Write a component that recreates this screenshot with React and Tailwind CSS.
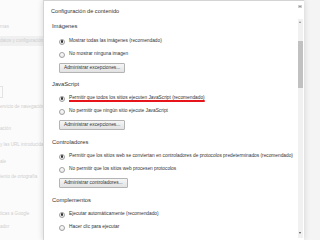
import React from "react";

const font = { fontFamily: '"Liberation Sans", Arial, sans-serif' };

const Radio = ({ checked, children }) => (
    <div className="h-[13px] flex items-center pl-[15px] gap-[4px]">
        <span className="w-[6px] h-[6px] rounded-full border border-[#a0a0a0] bg-gradient-to-b from-[#ffffff] to-[#e8e8e8] flex items-center justify-center shrink-0">
            {checked && <span className="w-[2.5px] h-[2.5px] rounded-full bg-[#333]" />}
        </span>
        <span className="text-[4.8px] text-[#333] whitespace-nowrap leading-none">{children}</span>
    </div>
);

const Btn = ({ children }) => (
    <div className="ml-[15px] h-[10px] w-fit px-[4px] flex items-center border border-[#b4b4b4] rounded-[1px] bg-gradient-to-b from-[#f6f6f6] to-[#e2e2e2] text-[4.8px] text-[#333] leading-none">
        {children}
    </div>
);

const Heading = ({ children }) => (
    <div className="h-[10px] flex items-center pl-[8px] text-[5.8px] text-[#333] leading-none">{children}</div>
);

const bgLines = [
    { y: "mt-[24px]", t: "rnas" },
    { y: "mt-[5px]", t: "datos y configuración de", hl: true },
    { y: "mt-[58px]", t: "ervicio de navegación" },
    { y: "mt-[15px]", t: "ación" },
    { y: "mt-[9px]", t: "y las URL introducidas" },
    { y: "mt-[10px]", t: "ale" },
    { y: "mt-[8px]", t: "iento de ortografía" },
    { y: "mt-[30px]", t: "ticas a Google" },
    { y: "mt-[6px]", t: "ador" },
];

export default function App() {
    return (
        <div className="w-[320px] h-[240px] overflow-hidden flex bg-[#f7f7f7]" style={font}>
            {/* faded settings page behind */}
            <div className="w-[43px] shrink-0 bg-[#fbfbfb] flex flex-col overflow-hidden relative">
                {bgLines.map((l, i) => (
                    <div
                        key={i}
                        className={`${l.y} h-[7px] flex items-center whitespace-nowrap text-[4.6px] text-[#cfcfcf] leading-none ${l.hl ? "bg-[#f0f0f0] h-[10px]" : ""}`}
                    >
                        {l.t}
                    </div>
                ))}
                <div className="absolute left-0 top-[86px] w-[3px] h-[12px] border border-l-0 border-[#e4e4e4]" />
            </div>

            {/* dialog */}
            <div className="w-[261px] shrink-0 bg-white border-l border-t border-[#d4d4d4] shadow-[0_0_6px_rgba(0,0,0,0.15)] relative flex">
                <div className="flex-1 flex flex-col pt-[6px] overflow-hidden">
                    <div className="h-[10px] flex items-center pl-[7px] text-[5.6px] text-[#333] leading-none">
                        Configuración de contenido
                    </div>

                    <div className="mt-[5px]">
                        <Heading>Imágenes</Heading>
                        <div className="mt-[3px]">
                            <Radio checked>Mostrar todas las imágenes (recomendado)</Radio>
                            <Radio>No mostrar ninguna imagen</Radio>
                        </div>
                        <div className="mt-[2px]"><Btn>Administrar excepciones...</Btn></div>
                    </div>

                    <div className="mt-[7px]">
                        <Heading>JavaScript</Heading>
                        <div className="mt-[2px]">
                            <Radio checked>
                                <span className="underline decoration-[#e8141b] decoration-[1.5px] underline-offset-[1px]">
                                    Permitir que todos los sitios ejecuten JavaScript (recomendado)
                                </span>
                            </Radio>
                            <Radio>No permitir que ningún sitio ejecute JavaScript</Radio>
                        </div>
                        <div className="mt-[2px]"><Btn>Administrar excepciones...</Btn></div>
                    </div>

                    <div className="mt-[8px]">
                        <Heading>Controladores</Heading>
                        <div className="mt-[2px]">
                            <Radio checked>
                                Permitir que los sitios web se conviertan en controladores de protocolos predeterminados (recomendado)
                            </Radio>
                            <Radio>No permitir que los sitios web procesen protocolos</Radio>
                        </div>
                        <div className="mt-[2px]"><Btn>Administrar controladores...</Btn></div>
                    </div>

                    <div className="mt-[8px]">
                        <Heading>Complementos</Heading>
                        <div className="mt-[2px]">
                            <Radio checked>Ejecutar automáticamente (recomendado)</Radio>
                            <Radio>Hacer clic para ejecutar</Radio>
                        </div>
                    </div>
                </div>

                {/* close + scrollbar */}
                <div className="w-[6px] shrink-0 flex flex-col items-center mr-[1px]">
                    <div className="mt-[4px] w-[4px] h-[3px] bg-[#9a9a9a] border border-[#cfcfcf]" />
                    <div className="mt-[11px] flex-1 w-[5px] bg-[#f1f1f1] flex flex-col items-center mb-[2px]">
                        <div className="mt-[2px] w-0 h-0 border-l-[1.5px] border-r-[1.5px] border-b-[2px] border-l-transparent border-r-transparent border-b-[#8a8a8a]" />
                        <div className="mt-[18px] w-[5px] h-[47px] bg-[#c1c1c1]" />
                        <div className="flex-1" />
                        <div className="mb-[4px] w-0 h-0 border-l-[1.5px] border-r-[1.5px] border-t-[2px] border-l-transparent border-r-transparent border-t-[#505050]" />
                    </div>
                </div>
            </div>

            <div className="flex-1 bg-[#f4f4f4]" />
        </div>
    );
}
